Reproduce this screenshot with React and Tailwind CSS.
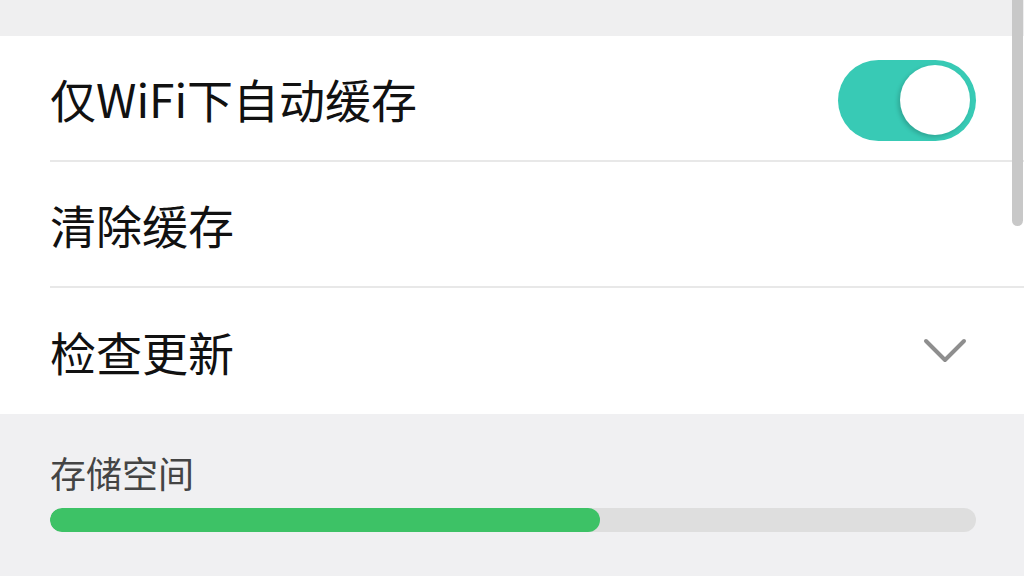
const FONT = { fontFamily: '"Noto Sans CJK SC", "Noto Sans", sans-serif' };

function Toggle() {
  return (
    <div className="w-[138px] h-[81px] mt-[4px] rounded-full bg-[#38cab5] flex items-center justify-end pr-[6px]">
      <div className="w-[70px] h-[70px] rounded-full bg-white shadow-[-2px_2px_4px_rgba(0,0,0,0.18)]" />
    </div>
  );
}

function Chevron() {
  return (
    <svg width="46" height="30" viewBox="0 0 46 30" fill="none">
      <path d="M4 5 L23 24 L42 5" stroke="#8e8e8e" strokeWidth="4" strokeLinecap="round" strokeLinejoin="round" />
    </svg>
  );
}

function Row({ label, right, last }) {
  return (
    <div className="pl-[50px] h-[126px]">
      <div className={`h-full flex items-center justify-between pr-[48px] ${last ? '' : 'border-b-2 border-[#e8e8e8]'}`}>
        <span className="text-[46px] text-[#111] leading-none">{label}</span>
        {right}
      </div>
    </div>
  );
}

export default function App() {
  const used = 59.4;
  return (
    <div className="relative w-[1024px] h-[576px] overflow-hidden bg-[#f0f0f2]" style={FONT}>
      <div className="h-[36px] bg-[#efeff0]" />
      <div className="bg-white">
        <Row label="仅WiFi下自动缓存" right={<Toggle />} />
        <Row label="清除缓存" />
        <Row label="检查更新" right={<div className="mr-[8px]"><Chevron /></div>} last />
      </div>
      <div className="pl-[50px] pr-[48px] pt-[40px]">
        <div className="text-[36px] leading-none text-[#444]">存储空间</div>
        <div className="mt-[18px] h-[24px] rounded-full bg-[#dedede] overflow-hidden">
          <div className="h-full rounded-full bg-[#3dc266]" style={{ width: `${used}%` }} />
        </div>
      </div>
      <div className="absolute top-0 right-[1px] w-[11px] h-[226px] rounded-b-full bg-[#c8c8c8]" />
    </div>
  );
}
